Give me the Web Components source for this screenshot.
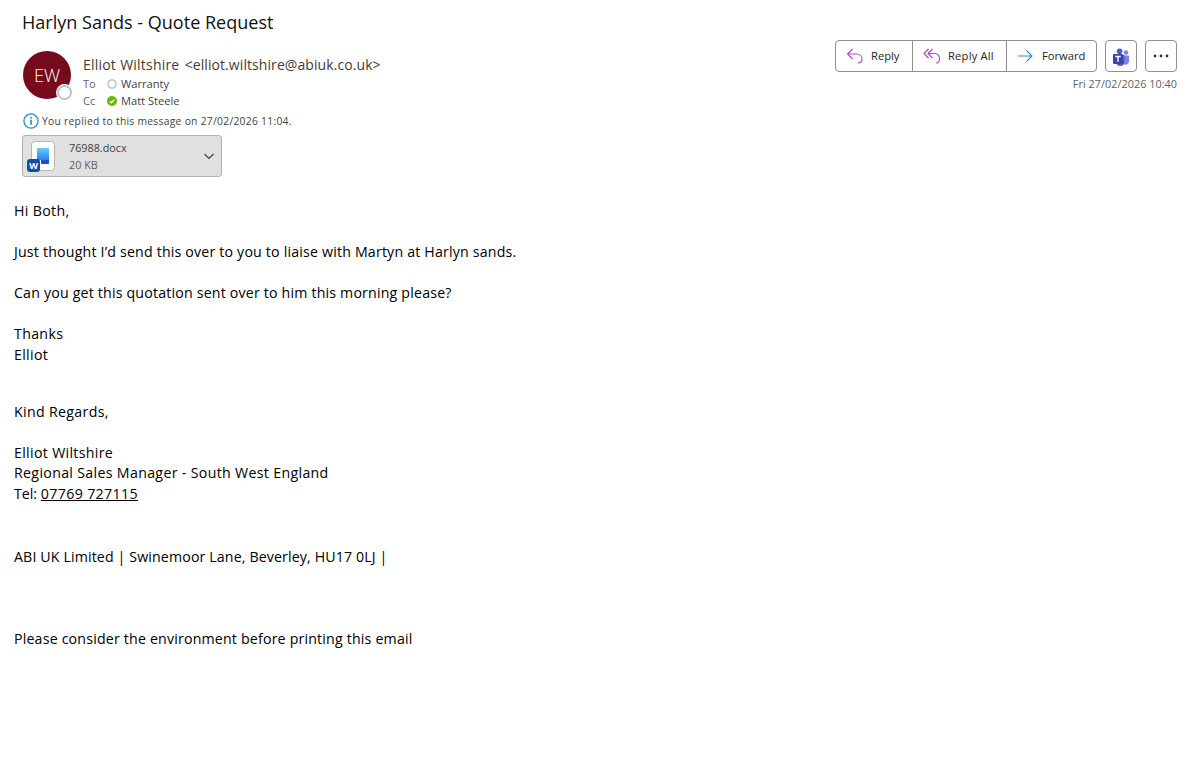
<!DOCTYPE html>
<html lang="en">
<head>
<meta charset="utf-8">
<title>Harlyn Sands - Quote Request</title>
<style>
html, body { margin: 0; background: #fff; }
body { font-family: "Open Sans", "Noto Sans", sans-serif; color: #000; }
</style>
</head>
<body>
<mail-view></mail-view>

<script>
class MailView extends HTMLElement {
    constructor() {
        super();
        this.attachShadow({ mode: 'open' });
    }

    connectedCallback() {
        this.shadowRoot.innerHTML = `
            <style>
                :host { display: block; width: 1183px; height: 773px; overflow: hidden; background: #fff; }
                h1 {
                    margin: 0;
                    padding: 8px 0 0 22px;
                    height: 40px;
                    box-sizing: border-box;
                    font-size: 18.05px;
                    font-weight: 400;
                    line-height: 28px;
                    color: #111;
                }
                .top { display: flex; justify-content: space-between; padding: 0 6px 0 22px; }
            </style>
            <h1>Harlyn Sands - Quote Request</h1>
            <div class="top">
                <mail-sender></mail-sender>
                <mail-actions></mail-actions>
            </div>
            <mail-body></mail-body>
        `;
    }
}

class MailSender extends HTMLElement {
    constructor() {
        super();
        this.attachShadow({ mode: 'open' });
    }

    connectedCallback() {
        this.shadowRoot.innerHTML = `
            <style>
                :host { display: block; padding-top: 11px; }
                .who { display: flex; gap: 12px; padding-left: 1px; height: 54px; }
                .avatar {
                    position: relative;
                    width: 48px;
                    height: 48px;
                    border-radius: 50%;
                    background: #750b1c;
                    color: #fff;
                    font-size: 18px;
                    font-weight: 300;
                    line-height: 48px;
                    text-align: center;
                }
                .avatar i {
                    position: absolute;
                    right: -1px;
                    bottom: -1px;
                    width: 11px;
                    height: 11px;
                    background: #fff;
                    border: 2px solid #b4c5d0;
                    border-radius: 50%;
                    box-shadow: 0 0 0 1px #fff;
                }
                .name { font-size: 14px; line-height: 20px; margin-top: 4px; color: #4a3a35; letter-spacing: 0.2px; word-spacing: 0.4px; }
                .name span { letter-spacing: 0.08px; margin-left: 1px; }
                .row { display: flex; align-items: center; font-size: 11.1px; line-height: 17px; color: #424242; }
                .row b { font-weight: 400; width: 24px; color: #616161; }
                .row svg { margin-right: 4px; }
                .info {
                    display: flex;
                    align-items: center;
                    gap: 3px;
                    height: 20px;
                    margin-top: 6px;
                    padding-left: 1px;
                    font-size: 10.3px;
                    letter-spacing: 0.28px;
                    color: #424242;
                }
            </style>
            <div class="who">
                <div class="avatar">EW<i></i></div>
                <div>
                    <div class="name">Elliot Wiltshire <span>&lt;elliot.wiltshire@abiuk.co.uk&gt;</span></div>
                    <div class="row">
                        <b>To</b>
                        <svg width="10" height="10" viewBox="0 0 10 10"><circle cx="5" cy="5" r="4.2" fill="#fff" stroke="#a9bfce" stroke-width="1.2"/></svg>
                        Warranty
                    </div>
                    <div class="row">
                        <b>Cc</b>
                        <svg width="10" height="10" viewBox="0 0 10 10"><circle cx="5" cy="5" r="5" fill="#6bb700"/><path d="M2.8 5.2 4.4 6.8 7.3 3.6" fill="none" stroke="#fff" stroke-width="1.4"/></svg>
                        Matt Steele
                    </div>
                </div>
            </div>
            <div class="info">
                <svg width="16" height="16" viewBox="0 0 16 16"><circle cx="8" cy="8" r="7.1" fill="#fff" stroke="#2b8fd0" stroke-width="1.3"/><rect x="7.2" y="6.8" width="1.7" height="5" fill="#2b8fd0"/><rect x="7.2" y="4" width="1.7" height="1.7" fill="#2b8fd0"/></svg>
                You replied to this message on 27/02/2026 11:04.
            </div>
            <attachment-chip name="76988.docx" size="20 KB"></attachment-chip>
        `;
    }
}

class AttachmentChip extends HTMLElement {
    constructor() {
        super();
        this.attachShadow({ mode: 'open' });
    }

    connectedCallback() {
        this.shadowRoot.innerHTML = `
            <style>
                :host {
                    display: flex;
                    align-items: center;
                    box-sizing: border-box;
                    width: 200px;
                    height: 42px;
                    margin-top: 4px;
                    padding: 0 6px 0 4px;
                    background: #e0e0e0;
                    border: 1px solid #b3b3b3;
                    border-radius: 3px;
                }
                .text { flex: 1; margin-left: 13px; font-size: 10.8px; line-height: 17px; color: #424242; }
                .size { color: #616161; }
            </style>
            <svg width="29" height="34" viewBox="0 0 29 34">
                <defs>
                    <linearGradient id="doc" x1="0" y1="0" x2="0" y2="1">
                        <stop offset="0" stop-color="#66ccff"/>
                        <stop offset="1" stop-color="#2a7ff0"/>
                    </linearGradient>
                </defs>
                <rect x="4.5" y="2.5" width="23" height="29" rx="3" fill="#fff" stroke="#b5b5b5"/>
                <rect x="14" y="17" width="8" height="8" rx="1" fill="#1a4fc8"/>
                <rect x="10" y="9" width="12" height="12" rx="1" fill="url(#doc)"/>
                <rect x="0" y="20" width="13" height="13" rx="3" fill="#134ba8"/>
                <text x="6.5" y="30" font-family="Open Sans, sans-serif" font-size="9" font-weight="700" fill="#fff" text-anchor="middle">W</text>
            </svg>
            <div class="text">
                <div>${this.getAttribute('name')}</div>
                <div class="size">${this.getAttribute('size')}</div>
            </div>
            <svg width="12" height="12" viewBox="0 0 12 12"><path d="M1.5 4 6 8.5 10.5 4" fill="none" stroke="#424242" stroke-width="1.2"/></svg>
        `;
    }
}

class MailActions extends HTMLElement {
    constructor() {
        super();
        this.attachShadow({ mode: 'open' });
    }

    connectedCallback() {
        this.shadowRoot.innerHTML = `
            <style>
                :host { display: block; }
                .bar { display: flex; gap: 8px; }
                .group, .square {
                    display: flex;
                    box-sizing: border-box;
                    height: 32px;
                    border: 1px solid #8f8f8f;
                    border-radius: 4px;
                    background: #fff;
                }
                .square { width: 32px; align-items: center; justify-content: center; }
                .btn {
                    display: flex;
                    align-items: center;
                    box-sizing: border-box;
                    font-size: 11.2px;
                    color: #242424;
                    border-left: 1px solid #8f8f8f;
                    padding-left: 10px;
                    gap: 7px;
                }
                .btn:first-child { border-left: 0; }
                .btn span { margin-top: -1px; }
                .date { margin-top: 4px; font-size: 10.8px; line-height: 16px; letter-spacing: 0.05px; text-align: right; color: #616161; }
            </style>
            <div class="bar">
                <div class="group">
                    <div class="btn" style="width:76px">
                        <svg width="18" height="18" viewBox="0 0 18 18" fill="none" stroke="#b146c2" stroke-width="1.1"><path d="M6.5 2 1.5 7 6.5 12M1.5 7H10.5C13.5 7 16 9 16 12S14 16 11.5 16"/></svg>
                        <span>Reply</span>
                    </div>
                    <div class="btn" style="width:94px">
                        <svg width="18" height="18" viewBox="0 0 18 18" fill="none" stroke="#b146c2" stroke-width="1.1"><path d="M5.5 2 1 6.5 5.5 11M9.5 2 5 6.5 9.5 11M5 6.5H11.5C14.5 6.5 16.5 8.7 16.5 11.5S15 16 13 16"/></svg>
                        <span style="letter-spacing:0.2px">Reply All</span>
                    </div>
                    <div class="btn" style="width:90px;gap:9px">
                        <svg width="16" height="16" viewBox="0 0 16 16" fill="none" stroke="#2b8fd0" stroke-width="1.1"><path d="M1 8H15M9.5 2.5 15 8 9.5 13.5"/></svg>
                        <span>Forward</span>
                    </div>
                </div>
                <div class="square">
                    <svg width="18" height="19" viewBox="0 0 18 19" style="margin-top:2px">
                        <circle cx="14" cy="4.6" r="2.3" fill="#7b83eb"/>
                        <path d="M10.5 7.5H17V13C17 15.5 15.5 16.8 13.8 16.8S10.5 15.5 10.5 13Z" fill="#7b83eb"/>
                        <circle cx="7.6" cy="3.2" r="2.8" fill="#5059c9"/>
                        <path d="M4 7H12.5V14C12.5 17 10.5 18 8.2 18S4 16.5 4 14Z" fill="#5059c9"/>
                        <rect x="1" y="6" width="10" height="10" rx="1" fill="#3d44a8"/>
                        <path d="M3.3 8.5H8.7M6 8.5V13.8" stroke="#fff" stroke-width="1.4" fill="none"/>
                    </svg>
                </div>
                <div class="square">
                    <svg width="16" height="4" viewBox="0 0 16 4" fill="#333"><circle cx="2" cy="2" r="1.4"/><circle cx="8" cy="2" r="1.4"/><circle cx="14" cy="2" r="1.4"/></svg>
                </div>
            </div>
            <div class="date">Fri 27/02/2026 10:40</div>
        `;
    }
}

class MailBody extends HTMLElement {
    constructor() {
        super();
        this.attachShadow({ mode: 'open' });
    }

    connectedCallback() {
        this.shadowRoot.innerHTML = `
            <style>
                :host {
                    display: block;
                    padding: 24px 0 0 14px;
                    font-size: 14.2px;
                    letter-spacing: 0.18px;
                    line-height: 20.5px;
                    color: #000;
                }
                p { margin: 0 0 20.5px; }
                a { color: inherit; text-decoration: underline; letter-spacing: 0.35px; }
                .wide { letter-spacing: 0.32px; }
                .tel { letter-spacing: 0; }
            </style>
            <p class="wide">Hi Both,</p>
            <p>Just thought I’d send this over to you to liaise with Martyn at Harlyn sands.</p>
            <p>Can you get this quotation sent over to him this morning please?</p>
            <p class="wide" style="margin-bottom:36.5px">Thanks<br>Elliot</p>
            <p class="wide">Kind Regards,</p>
            <p class="wide" style="margin-bottom:42.5px">Elliot Wiltshire<br>Regional Sales Manager - South West England<br><span class="tel">Tel: </span><a>07769 727115</a></p>
            <p style="margin-bottom:61.5px;letter-spacing:0.13px">ABI UK Limited | Swinemoor Lane, Beverley, HU17 0LJ |</p>
            <p>Please consider the environment before printing this email</p>
        `;
    }
}

customElements.define('mail-view', MailView);
customElements.define('mail-sender', MailSender);
customElements.define('attachment-chip', AttachmentChip);
customElements.define('mail-actions', MailActions);
customElements.define('mail-body', MailBody);
</script>
</body>
</html>
